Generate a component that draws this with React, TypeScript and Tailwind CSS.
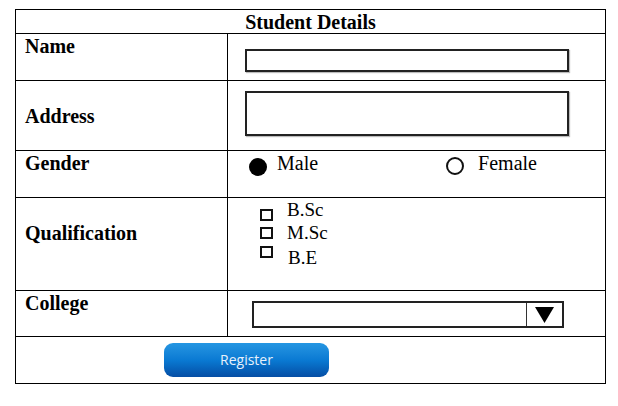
import React from "react";

const serif = "font-['Liberation_Serif','Times_New_Roman',serif]";

function Label({ text, className = "" }: { text: string; className?: string }) {
    return (
        <div className={`w-[212px] shrink-0 border-r border-black pl-[9px] ${className}`}>
            <span className="text-[20px] leading-[23px] font-bold text-black">{text}</span>
        </div>
    );
}

function Checkbox({ label, boxTop, textLeft, className = "" }: { label: string; boxTop: string; textLeft: string; className?: string }) {
    return (
        <div className={`flex items-start h-[23px] ${className}`}>
            <span className={`block w-[13px] h-[12px] border-2 border-[#111] ${boxTop}`} />
            <span className={`text-[19px] leading-[23px] text-black ${textLeft}`}>{label}</span>
        </div>
    );
}

export default function App() {
    return (
        <div className={`w-[618px] h-[406px] bg-white pt-[9px] pl-[15px] ${serif}`}>
            <div className="w-[591px] border border-black flex flex-col">
                {/* header */}
                <div className="h-[23px] flex justify-center pt-[2px]">
                    <span className="text-[20px] leading-[21px] font-bold text-black">Student Details</span>
                </div>

                {/* name */}
                <div className="h-[47px] border-t border-black flex">
                    <Label text="Name" className="pt-[1px]" />
                    <div className="flex-1 pt-[15px] pl-[17px]">
                        <div className="w-[324px] h-[23px] border-2 border-[#222] shadow-[1px_1px_1px_#bbb]" />
                    </div>
                </div>

                {/* address */}
                <div className="h-[70px] border-t border-black flex">
                    <Label text="Address" className="pt-[24px]" />
                    <div className="flex-1 pt-[10px] pl-[17px]">
                        <div className="w-[324px] h-[45px] border-2 border-[#222] shadow-[1px_1px_1px_#bbb]" />
                    </div>
                </div>

                {/* gender */}
                <div className="h-[47px] border-t border-black flex">
                    <Label text="Gender" className="pt-[1px]" />
                    <div className="flex-1 pl-[21px] pt-[1px] flex items-start">
                        <span className="block w-[18px] h-[18px] rounded-full bg-black mt-[6px]" />
                        <span className="text-[20px] leading-[23px] text-black ml-[10px]">Male</span>
                        <span className="block w-[18px] h-[18px] rounded-full border-2 border-[#111] mt-[5px] ml-[128px]" />
                        <span className="text-[20px] leading-[23px] text-black ml-[14px]">Female</span>
                    </div>
                </div>

                {/* qualification */}
                <div className="h-[93px] border-t border-black flex">
                    <Label text="Qualification" className="pt-[24px]" />
                    <div className="flex-1 pl-[32px] flex flex-col">
                        <Checkbox label="B.Sc" boxTop="mt-[11px]" textLeft="ml-[14px]" />
                        <Checkbox label="M.Sc" boxTop="mt-[6px]" textLeft="ml-[14px]" />
                        <Checkbox label="B.E" boxTop="mt-[0px]" textLeft="ml-[15px]" className="mt-[2px]" />
                    </div>
                </div>

                {/* college */}
                <div className="h-[46px] border-t border-black flex">
                    <Label text="College" className="pt-[1px]" />
                    <div className="flex-1 pt-[10px] pl-[24px]">
                        <div className="w-[312px] h-[27px] border-2 border-[#222] flex justify-end">
                            <div className="w-[36px] h-full border-l border-[#333] flex items-center justify-center">
                                <svg width="19" height="16" viewBox="0 0 19 16">
                                    <polygon points="0,0 19,0 9.5,16" fill="#000" />
                                </svg>
                            </div>
                        </div>
                    </div>
                </div>

                {/* register */}
                <div className="h-[47px] border-t border-black pt-[6px] pl-[148px]">
                    <button className="w-[165px] h-[34px] rounded-[9px] bg-gradient-to-b from-[#2596e2] via-[#0a7ad3] to-[#064ea5] text-[#e8f1fb] text-[14px] font-['Open_Sans',sans-serif] pb-[2px]">
                        Register
                    </button>
                </div>
            </div>
        </div>
    );
}
